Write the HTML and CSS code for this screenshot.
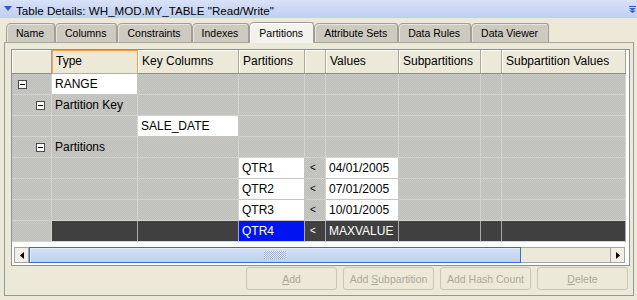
FILE: index.html
```html
<!DOCTYPE html>
<html lang="en">
<head>
  <meta charset="UTF-8" />
  <title>Table Details</title>
  <link rel="stylesheet" href="styles.css">
</head>
<body>

  <div class="titlebar">
    <svg class="collapse" width="8" height="6" viewBox="0 0 8 6"><polygon points="0,0 8,0 4,5" fill="#2b5bcf"/></svg>
    <span class="title">Table Details: WH_MOD.MY_TABLE "Read/Write"</span>
    <svg class="menu" width="7" height="7" viewBox="0 0 7 7"><rect x="0" y="0" width="7" height="1" fill="#2b5bcf"/><polygon points="0,2 7,2 3.5,4.5" fill="#2b5bcf"/><polygon points="0,4.5 7,4.5 3.5,7" fill="#2b5bcf"/></svg>
  </div>

  <div class="tabs">
    <div class="tab">Name</div>
    <div class="tab">Columns</div>
    <div class="tab">Constraints</div>
    <div class="tab">Indexes</div>
    <div class="tab active">Partitions</div>
    <div class="tab">Attribute Sets</div>
    <div class="tab">Data Rules</div>
    <div class="tab">Data Viewer</div>
  </div>

  <div class="panel">
    <div class="pane">
      <div class="grid">
        <div class="h"></div>
        <div class="h focus">Type</div>
        <div class="h">Key Columns</div>
        <div class="h">Partitions</div>
        <div class="h"></div>
        <div class="h">Values</div>
        <div class="h">Subpartitions</div>
        <div class="h"></div>
        <div class="h">Subpartition Values</div>

        <div class="c rh"><span class="tog"></span></div>
        <div class="c w">RANGE</div>
        <div class="c"></div><div class="c"></div><div class="c"></div><div class="c"></div><div class="c"></div><div class="c"></div><div class="c"></div>

        <div class="c rh lvl1"><span class="tog"></span></div>
        <div class="c">Partition Key</div>
        <div class="c"></div><div class="c"></div><div class="c"></div><div class="c"></div><div class="c"></div><div class="c"></div><div class="c"></div>

        <div class="c rh"></div>
        <div class="c"></div>
        <div class="c w">SALE_DATE</div>
        <div class="c"></div><div class="c"></div><div class="c"></div><div class="c"></div><div class="c"></div><div class="c"></div>

        <div class="c rh lvl1"><span class="tog"></span></div>
        <div class="c">Partitions</div>
        <div class="c"></div><div class="c"></div><div class="c"></div><div class="c"></div><div class="c"></div><div class="c"></div><div class="c"></div>

        <div class="c rh"></div>
        <div class="c"></div><div class="c"></div>
        <div class="c w">QTR1</div>
        <div class="c op">&lt;</div>
        <div class="c w">04/01/2005</div>
        <div class="c"></div><div class="c"></div><div class="c"></div>

        <div class="c rh"></div>
        <div class="c"></div><div class="c"></div>
        <div class="c w">QTR2</div>
        <div class="c op">&lt;</div>
        <div class="c w">07/01/2005</div>
        <div class="c"></div><div class="c"></div><div class="c"></div>

        <div class="c rh"></div>
        <div class="c"></div><div class="c"></div>
        <div class="c w">QTR3</div>
        <div class="c op">&lt;</div>
        <div class="c w">10/01/2005</div>
        <div class="c"></div><div class="c"></div><div class="c"></div>

        <div class="c rh"></div>
        <div class="c sel"></div><div class="c sel"></div>
        <div class="c sel cur">QTR4</div>
        <div class="c sel op">&lt;</div>
        <div class="c sel">MAXVALUE</div>
        <div class="c sel"></div><div class="c sel"></div><div class="c sel"></div>
      </div>

      <div class="hscroll">
        <div class="arr"><svg width="4" height="7" viewBox="0 0 4 7"><polygon points="4,0 4,7 0,3.5" fill="#000"/></svg></div>
        <div class="thumb"><span class="grip"></span></div>
        <div class="track"></div>
        <div class="arr"><svg width="4" height="7" viewBox="0 0 4 7"><polygon points="0,0 0,7 4,3.5" fill="#000"/></svg></div>
      </div>
    </div>

    <div class="actions">
      <button class="btn" disabled><u>A</u>dd</button>
      <button class="btn" disabled>Add <u>S</u>ubpartition</button>
      <button class="btn" disabled>Add Hash Count</button>
      <button class="btn" disabled><u>D</u>elete</button>
    </div>
  </div>

</body>
</html>
```

FILE: styles.css
```css
* {
  box-sizing: border-box;
}

body {
  margin: 0;
  width: 637px;
  height: 300px;
  overflow: hidden;
  background: #ece9d8;
  font-family: "Liberation Sans", Arial, sans-serif;
  color: #000;
}

/* title bar */
.titlebar {
  display: flex;
  align-items: center;
  height: 18px;
  padding: 0 1px 0 4px;
  background: linear-gradient(#d8e2f8, #bfcef1);
  font-size: 11.6px;
}

.titlebar .title {
  flex: 1;
  margin-left: 4px;
  padding-top: 2px;
}

.titlebar .menu {
  margin-top: 1px;
}

/* tabs */
.tabs {
  display: flex;
  align-items: flex-end;
  height: 19px;
  margin-top: 5px;
  padding-left: 6px;
}

.tab {
  height: 19px;
  padding: 0 10px 0 9px;
  line-height: 18px;
  font-size: 10.5px;
  background: #cdcabf;
  border: 1px solid #a09f96;
  border-bottom: none;
  border-radius: 5px 3px 0 0;
  box-shadow: inset 1px 1px 0 #e6e4dc;
}

.tab.active {
  position: relative;
  z-index: 1;
  height: 21px;
  margin-bottom: -1px;
  line-height: 20px;
  background: #f3f2ec;
  box-shadow: inset 1px 1px 0 #fff;
}

/* panel */
.panel {
  width: 630px;
  height: 254px;
  margin-left: 4px;
  padding: 6px 3px 5px 6px;
  border: 1px solid #919b9c;
  border-top-color: #a6a59a;
}

.pane {
  width: 619px;
  height: 217px;
  border: 1px solid #8e8f8f;
  background: #fff;
}

.grid {
  display: grid;
  grid-template-columns: 40px 86px 101px 66px 21px 73px 82px 21px 124px;
  grid-template-rows: 24px repeat(8, 21px);
  width: 614px;
  font-size: 12px;
  background: repeating-conic-gradient(#bdbdb9 0 25%, #c9c9c5 0 50%) 0 0 / 2px 2px;
}

.h {
  padding-left: 4px;
  line-height: 23px;
  background: #ece9d8;
  border-right: 1px solid #a8a79c;
  border-bottom: 1px solid #8f8d82;
  box-shadow: inset 1px 1px 0 #fff;
  white-space: nowrap;
}

.h.focus {
  border: 1px solid #f2a23a;
  padding-left: 3px;
  line-height: 21px;
  box-shadow: none;
}

.c {
  padding-left: 3px;
  line-height: 20px;
  border-right: 1px solid #d3d3cf;
  border-bottom: 1px solid #d3d3cf;
  white-space: nowrap;
  overflow: hidden;
}

.c.w {
  background: #fff;
  border-color: #c4c4c0;
}

.c.op {
  padding-left: 5px;
  font-size: 10px;
}

.c.sel {
  background: #404040;
  color: #fff;
  border-right-color: #a9a9a9;
}

.c.cur {
  background: #0014f2;
}

.rh {
  display: flex;
  align-items: center;
  padding-left: 6px;
}

.rh.lvl1 {
  padding-left: 24px;
}

.tog {
  width: 9px;
  height: 9px;
  border: 1px solid #4a4a4a;
  background: linear-gradient(#000, #000) center / 5px 1px no-repeat, #fff;
}

/* horizontal scrollbar */
.hscroll {
  display: flex;
  height: 16px;
  margin: 5px 4px 0 2px;
}

.arr {
  display: flex;
  align-items: center;
  justify-content: center;
  width: 15px;
  background: #f1efe6;
  border: 1px solid #a6a59c;
}

.thumb {
  display: flex;
  align-items: center;
  justify-content: center;
  width: 492px;
  border: 1px solid #3a6cd0;
  background: linear-gradient(#d4e1f5, #bdd0ee);
  box-shadow: inset 1px 1px 0 #e6eefa;
}

.grip {
  width: 22px;
  height: 8px;
  background: repeating-conic-gradient(#8ea7d6 0 25%, #f4f7fc 0 50%) 0 0 / 2px 2px;
}

.track {
  flex: 1;
  background: #ece9d8;
  border-top: 1px solid #a6a59c;
  border-bottom: 1px solid #a6a59c;
}

/* buttons */
.actions {
  display: flex;
  justify-content: flex-end;
  gap: 6px;
  margin: 1px 2px 0 0;
}

.btn {
  width: 91px;
  height: 23px;
  padding: 0;
  border: 1px solid #c9c6b6;
  border-radius: 3px;
  background: #ece9d8;
  color: #aca899;
  font-family: "Liberation Sans", Arial, sans-serif;
  font-size: 10.5px;
}
```
